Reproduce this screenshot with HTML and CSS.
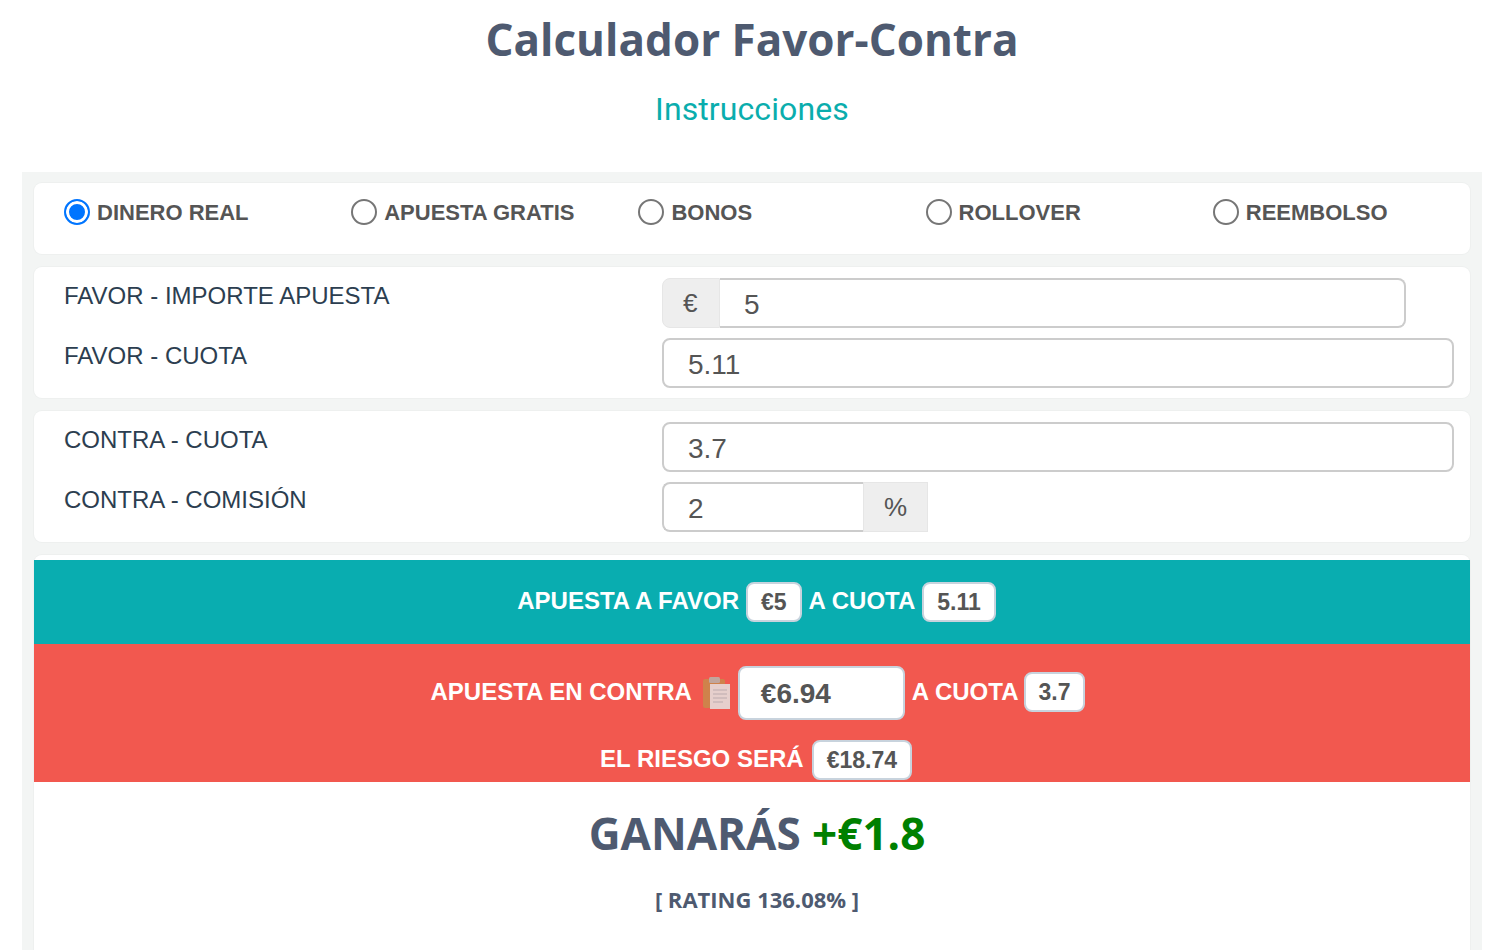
FILE: index.html
```html
<!DOCTYPE html>
<html lang="es">
<head>
    <meta charset="UTF-8">
    <meta name="viewport" content="width=device-width, initial-scale=1.0">
    <title>Calculador Favor-Contra</title>
    <link rel="stylesheet" href="styles.css">
</head>
<body>
    <h1 class="title">Calculador Favor-Contra</h1>
    <a class="instructions" href="#">Instrucciones</a>

    <div class="calculator">
        <!-- tipo de apuesta -->
        <div class="card bet-types">
            <label class="bet-type"><span class="radio checked"></span>DINERO REAL</label>
            <label class="bet-type"><span class="radio"></span>APUESTA GRATIS</label>
            <label class="bet-type"><span class="radio"></span>BONOS</label>
            <label class="bet-type"><span class="radio"></span>ROLLOVER</label>
            <label class="bet-type"><span class="radio"></span>REEMBOLSO</label>
        </div>

        <!-- favor -->
        <div class="card fields">
            <div class="field">
                <div class="field-label">FAVOR - IMPORTE APUESTA</div>
                <div class="input-group group-stake">
                    <span class="addon addon-left">€</span>
                    <span class="input input-right">5</span>
                </div>
            </div>
            <div class="field">
                <div class="field-label">FAVOR - CUOTA</div>
                <span class="input">5.11</span>
            </div>
        </div>

        <!-- contra -->
        <div class="card fields">
            <div class="field">
                <div class="field-label">CONTRA - CUOTA</div>
                <span class="input">3.7</span>
            </div>
            <div class="field">
                <div class="field-label">CONTRA - COMISIÓN</div>
                <div class="input-group group-commission">
                    <span class="input input-left">2</span>
                    <span class="addon addon-right">%</span>
                </div>
            </div>
        </div>

        <!-- resultado -->
        <div class="card result">
            <div class="band band-favor">
                <span class="band-text">APUESTA A FAVOR</span>
                <span class="pill">€5</span>
                <span class="band-text">A CUOTA</span>
                <span class="pill">5.11</span>
            </div>
            <div class="band band-contra">
                <div class="band-row">
                    <span class="band-text">APUESTA EN CONTRA</span>
                    <svg class="clipboard" width="30" height="34" viewBox="0 0 30 34">
                        <rect x="1" y="3" width="22" height="29" rx="2" fill="#c98a4b"/>
                        <rect x="7" y="1" width="11" height="6" rx="1.5" fill="#b9b4ab"/>
                        <rect x="8" y="8" width="20" height="25" fill="#e4e4e2"/>
                        <path d="M11 14h14M11 18h14M11 22h14M11 26h10" stroke="#b4bac0" stroke-width="1.2"/>
                    </svg>
                    <span class="pill pill-large">€6.94</span>
                    <span class="band-text">A CUOTA</span>
                    <span class="pill pill-raised">3.7</span>
                </div>
                <div class="band-row risk-row">
                    <span class="band-text">EL RIESGO SERÁ</span>
                    <span class="pill">€18.74</span>
                </div>
            </div>
            <div class="summary">
                <div class="profit">GANARÁS <span class="profit-value">+€1.8</span></div>
                <div class="rating">[ RATING 136.08% ]</div>
            </div>
        </div>
    </div>
</body>
</html>
```

FILE: styles.css
```css
body {
    margin: 0;
    background: #fff;
    font-family: "Liberation Sans", Arial, sans-serif;
    color: #2c3e50;
}

.title {
    margin: 0;
    padding: 10px 2px 0 0;
    height: 66px;
    text-align: center;
    font-family: "Open Sans", sans-serif;
    font-size: 44px;
    line-height: 58px;
    font-weight: 700;
    color: #4e5a70;
}

.instructions {
    display: block;
    width: 1504px;
    text-align: center;
    font-family: Roboto, sans-serif;
    font-size: 32px;
    line-height: 40px;
    letter-spacing: 0.1px;
    color: #0aadad;
    text-decoration: none;
    margin-top: 13px;
}

.calculator {
    margin: 43px 24px 0 22px;
    padding: 11px 12px 0;
    background: #f3f5f4;
}

.card {
    background: #fff;
    border-radius: 8px;
    box-shadow: 0 0 0 1px #eef0ef;
    margin-bottom: 13px;
}

.bet-types {
    display: grid;
    grid-template-columns: repeat(5, 1fr);
    height: 71px;
}

.bet-type {
    display: flex;
    align-items: flex-start;
    gap: 7px;
    padding: 16px 0 0 30px;
    font-size: 22px;
    line-height: 27px;
    font-weight: 700;
    color: #555;
}

.radio {
    flex: none;
    box-sizing: border-box;
    width: 26px;
    height: 26px;
    border: 2px solid #767676;
    border-radius: 50%;
    background: #fff;
}

.radio.checked {
    border-color: #0075ff;
    background: #0075ff;
    box-shadow: inset 0 0 0 3px #fff;
}

.fields {
    height: 131px;
    padding: 11px 16px 0 30px;
    box-sizing: border-box;
    display: flex;
    flex-direction: column;
    gap: 10px;
}

.field {
    display: flex;
    height: 50px;
}

.field-label {
    flex: none;
    width: 598px;
    font-size: 24px;
    line-height: 36px;
}

.input {
    flex: 1;
    box-sizing: border-box;
    height: 50px;
    padding-left: 24px;
    border: 2px solid #ccc;
    border-radius: 8px;
    background: #fff;
    font-size: 28px;
    line-height: 49px;
    color: #555;
}

.input-group {
    display: flex;
}

.group-stake {
    width: 744px;
}

.group-commission {
    width: 266px;
}

.input-right {
    border-radius: 0 8px 8px 0;
    border-left: 0;
}

.input-left {
    border-radius: 8px 0 0 8px;
    border-right: 0;
}

.addon {
    flex: none;
    box-sizing: border-box;
    height: 50px;
    width: 58px;
    padding-left: 20px;
    background: #eee;
    border: 1px solid #e6e6e6;
    font-size: 26px;
    line-height: 49px;
    color: #555;
}

.addon-left {
    border-radius: 8px 0 0 8px;
}

.addon-right {
    width: 65px;
}

.result {
    margin-bottom: 0;
    padding-top: 5px;
    border-radius: 8px 8px 0 0;
    height: 500px;
    font-size: 24px;
    font-weight: 700;
}

.band {
    color: #fff;
}

.band-favor {
    height: 84px;
    background: #09adb0;
    display: flex;
    justify-content: center;
    align-items: center;
    gap: 7px;
    padding-left: 9px;
    box-sizing: border-box;
}

.band-contra {
    height: 138px;
    background: #f2584f;
    padding-top: 22px;
    box-sizing: border-box;
}

.band-row {
    display: flex;
    justify-content: center;
    align-items: center;
    gap: 7px;
    height: 54px;
    padding-left: 12px;
}

.band-text {
    margin-bottom: 3px;
}

.risk-row {
    margin-top: 20px;
    height: 40px;
    gap: 8px;
    padding-left: 8px;
}

.clipboard {
    margin: 0 -1px 0 3px;
    opacity: 0.85;
}

.pill {
    display: inline-block;
    box-sizing: border-box;
    height: 40px;
    padding: 0 13px;
    border: 2px solid #c8d3dd;
    border-radius: 8px;
    background: #fff;
    color: #555;
    font-size: 23px;
    line-height: 36px;
}

.pill-raised {
    margin: 0 0 2px -2px;
}

.pill-large {
    width: 167px;
    height: 54px;
    padding-left: 21px;
    font-size: 28px;
    line-height: 52px;
}

.summary {
    padding-left: 10px;
    text-align: center;
}

.profit {
    margin-top: 21px;
    font-family: "Open Sans", sans-serif;
    font-size: 44px;
    line-height: 60px;
    color: #4e5a70;
}

.profit-value {
    color: #008000;
}

.rating {
    margin-top: 21px;
    font-family: "Open Sans", sans-serif;
    font-size: 22px;
    line-height: 30px;
    color: #4e5a70;
}
```
